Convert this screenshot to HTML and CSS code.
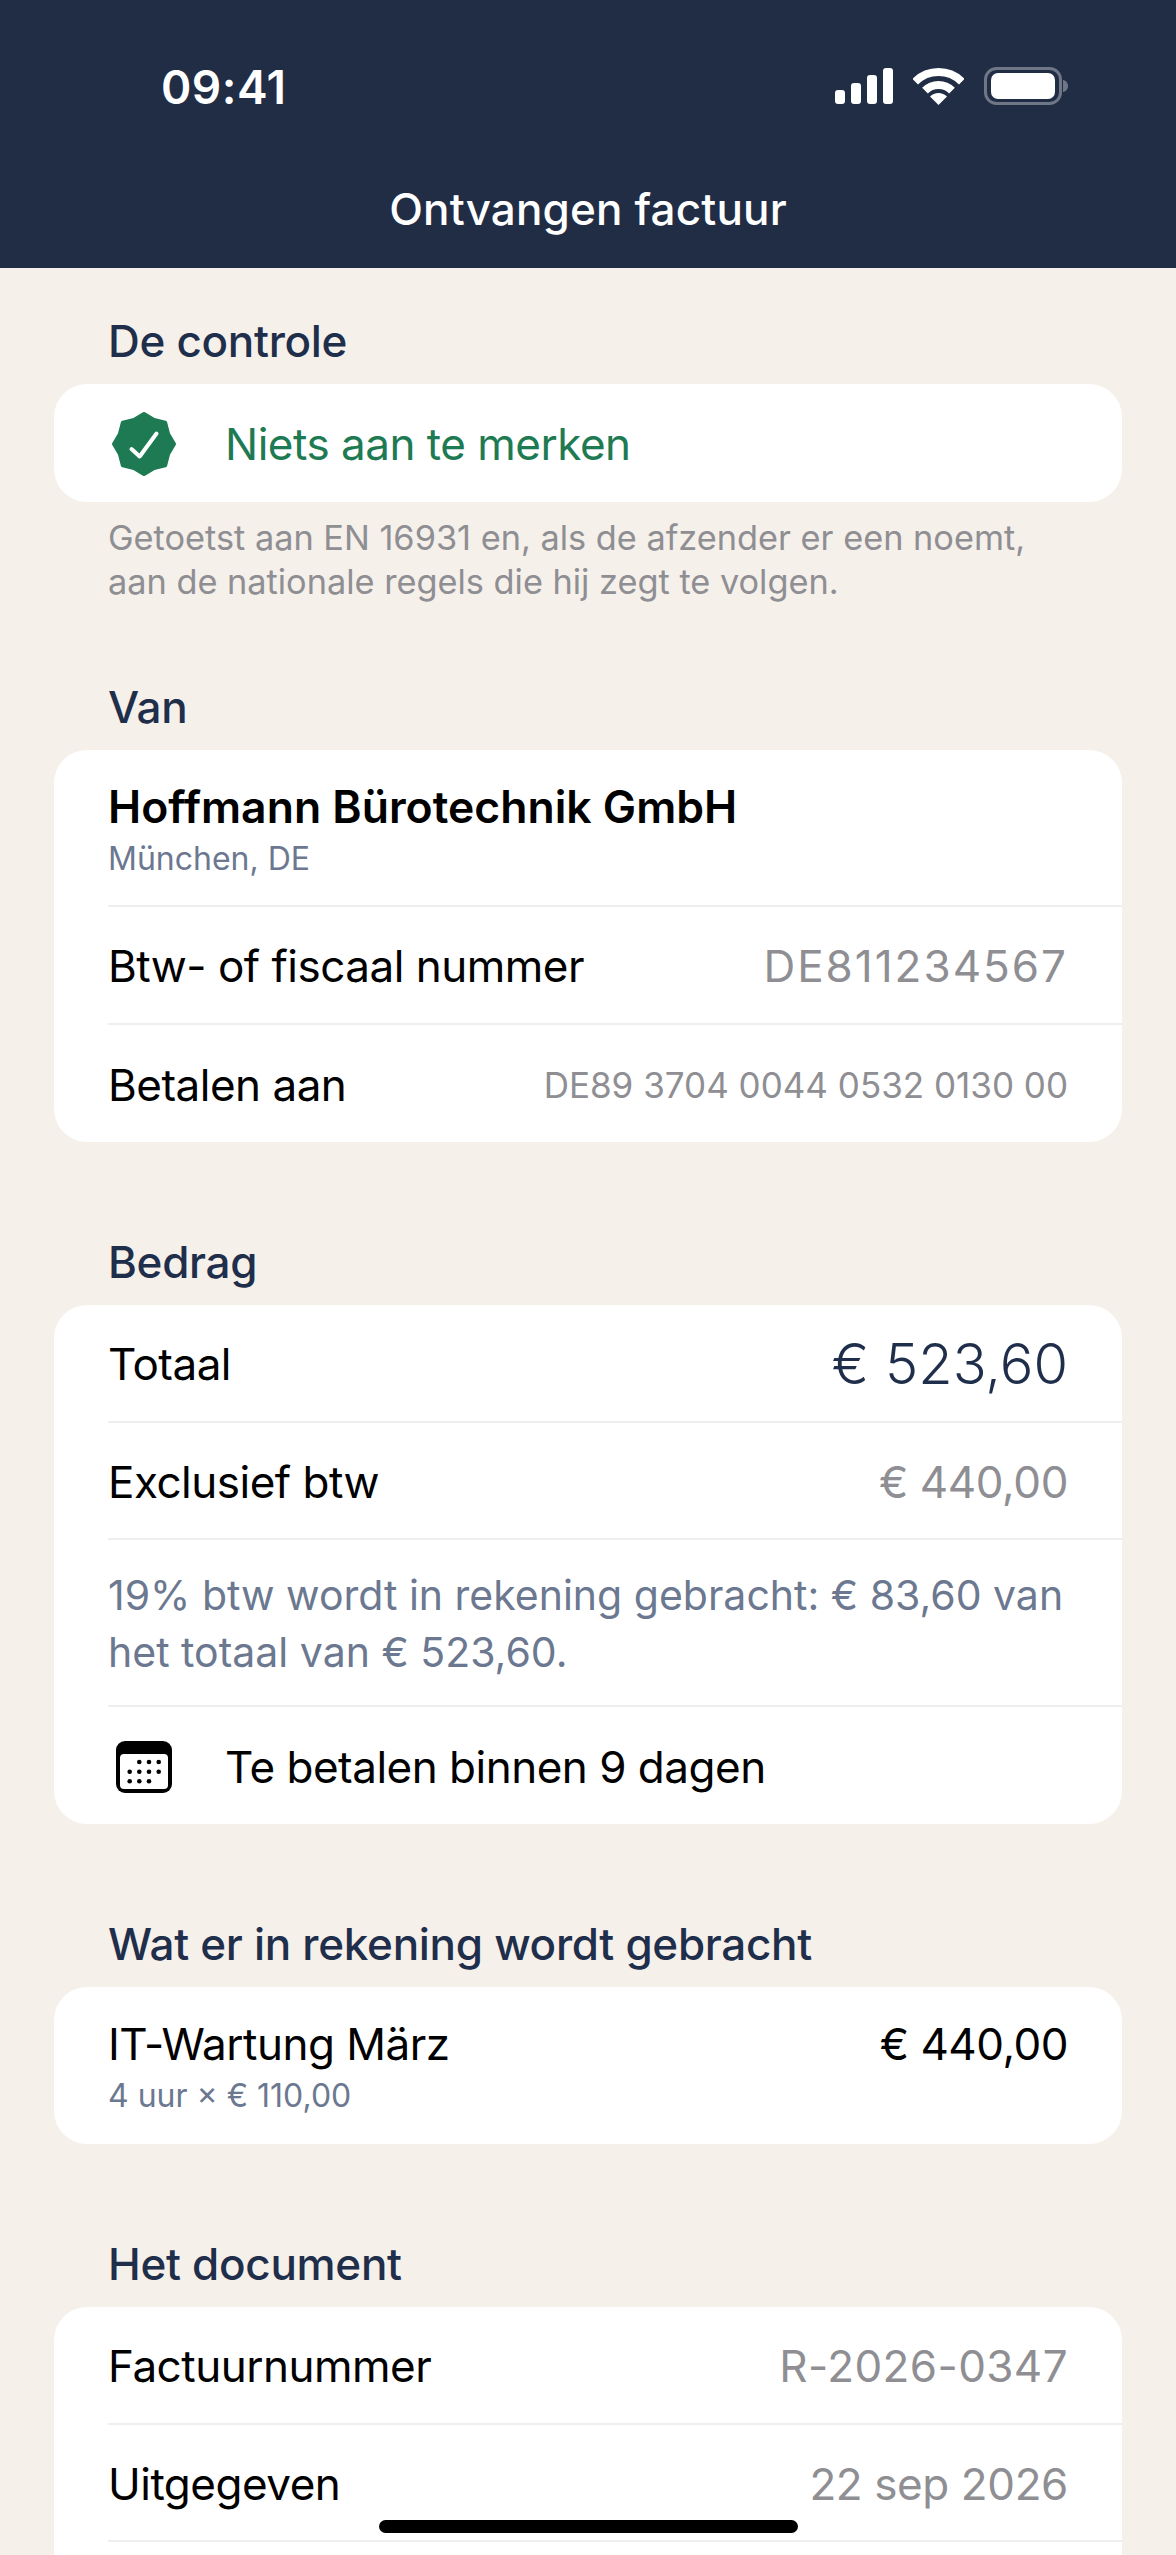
FILE: index.html
```html
<!DOCTYPE html>
<html lang="nl">
<head>
    <meta charset="UTF-8">
    <meta name="viewport" content="width=device-width, initial-scale=1.0">
    <title>Ontvangen factuur</title>
    <link rel="stylesheet" href="styles.css">
</head>
<body>

    <header class="topbar">
        <div class="status">
            <span class="time">09:41</span>
            <div class="status-icons">
                <svg width="58" height="36" viewBox="0 0 58 36" fill="#fff">
                    <rect x="0" y="22" width="10" height="14" rx="3"/>
                    <rect x="16" y="15" width="10" height="21" rx="3"/>
                    <rect x="32" y="7" width="10" height="29" rx="3"/>
                    <rect x="48" y="0" width="10" height="36" rx="3"/>
                </svg>
                <svg width="51" height="37" viewBox="0 0 51 37">
                    <path d="M2.2 13.7a33 33 0 0 1 46.6 0" fill="none" stroke="#fff" stroke-width="8"/>
                    <path d="M12 22.6a19 19 0 0 1 27 0" fill="none" stroke="#fff" stroke-width="8"/>
                    <path d="M25.5 37L17 28.5a12 12 0 0 1 17 0z" fill="#fff"/>
                </svg>
                <svg width="84" height="38" viewBox="0 0 84 38">
                    <rect x="1.5" y="1.5" width="75" height="35" rx="11" fill="none" stroke="#6f7787" stroke-width="3"/>
                    <rect x="7" y="6" width="64" height="26" rx="7" fill="#fff"/>
                    <path d="M79 13c3 .5 5 3 5 6s-2 5.500-5 6z" fill="#6f7787"/>
                </svg>
            </div>
        </div>
        <h1 class="page-title">Ontvangen factuur</h1>
    </header>

    <main class="content">
        <section class="section section-noted">
            <h2>De controle</h2>
            <div class="card">
                <div class="row row-icon">
                    <svg class="icon" width="68" height="68" viewBox="0 0 68 68">
                        <polygon points="34,4 44,9.900 55.200,12.800 58.100,24 64,34 58.100,44 55.200,55.200 44,58.100 34,64 24,58.100 12.800,55.200 9.900,44 4,34 9.900,24 12.800,12.800 24,9.900" fill="#1e7a52" stroke="#1e7a52" stroke-width="4" stroke-linejoin="round"/>
                        <path d="M21.500 39l8.200 7.500L46.500 23.500" fill="none" stroke="#fff" stroke-width="4" stroke-linecap="round" stroke-linejoin="round"/>
                    </svg>
                    <span class="ok">Niets aan te merken</span>
                </div>
            </div>
            <p class="note">Getoetst aan EN 16931 en, als de afzender er een noemt,<br>aan de nationale regels die hij zegt te volgen.</p>
        </section>

        <section class="section">
            <h2>Van</h2>
            <div class="card">
                <div class="row row-stacked">
                    <div class="party-name">Hoffmann Bürotechnik GmbH</div>
                    <div class="sub">München, DE</div>
                </div>
                <div class="row"><span>Btw- of fiscaal nummer</span><span class="val val-wide">DE811234567</span></div>
                <div class="row"><span>Betalen aan</span><span class="val val-small">DE89 3704 0044 0532 0130 00</span></div>
            </div>
        </section>

        <section class="section">
            <h2>Bedrag</h2>
            <div class="card">
                <div class="row"><span>Totaal</span><span class="total">€ 523,60</span></div>
                <div class="row"><span>Exclusief btw</span><span class="val">€ 440,00</span></div>
                <div class="row row-text">19% btw wordt in rekening gebracht: € 83,60 van het totaal van € 523,60.</div>
                <div class="row row-icon">
                    <svg class="icon" width="56" height="52" viewBox="0 0 56 52">
                        <rect width="56" height="52" rx="9" fill="#000"/>
                        <rect x="4" y="13" width="48" height="35" rx="4" fill="#fff"/>
                        <g fill="#000">
                            <circle cx="23.300" cy="21" r="2.300"/><circle cx="33" cy="21" r="2.300"/><circle cx="42.700" cy="21" r="2.300"/>
                            <circle cx="13.700" cy="30.700" r="2.300"/><circle cx="23.300" cy="30.700" r="2.300"/><circle cx="33" cy="30.700" r="2.300"/><circle cx="42.700" cy="30.700" r="2.300"/>
                            <circle cx="13.700" cy="40.300" r="2.300"/><circle cx="23.300" cy="40.300" r="2.300"/><circle cx="33" cy="40.300" r="2.300"/>
                        </g>
                    </svg>
                    <span>Te betalen binnen 9 dagen</span>
                </div>
            </div>
        </section>

        <section class="section">
            <h2>Wat er in rekening wordt gebracht</h2>
            <div class="card">
                <div class="row row-stacked row-item">
                    <div>
                        <div class="item-name">IT-Wartung März</div>
                        <div class="sub">4 uur × € 110,00</div>
                    </div>
                    <span class="item-name">€ 440,00</span>
                </div>
            </div>
        </section>

        <section class="section">
            <h2>Het document</h2>
            <div class="card">
                <div class="row"><span>Factuurnummer</span><span class="val val-code">R-2026-0347</span></div>
                <div class="row"><span>Uitgegeven</span><span class="val">22 sep 2026</span></div>
                <div class="row"></div>
            </div>
        </section>
    </main>

    <div class="home-bar"></div>

</body>
</html>
```

FILE: styles.css
```css
html, body { height: 2555px; overflow: hidden; }
body { margin: 0; background: #f5f0ea; font-family: Inter, "Liberation Sans", sans-serif; color: #000; font-size: 44px; letter-spacing: -0.5px; }

.topbar { background: #212d45; height: 268px; color: #fff; box-sizing: border-box; padding-top: 60px; }
.status { display: flex; justify-content: space-between; align-items: center; padding: 0 108px 0 161px; height: 52px; }
.time { font-size: 46px; font-weight: 600; letter-spacing: 0.5px; margin-top: 2px; }
.status-icons { display: flex; align-items: center; gap: 20px; }
.page-title { margin: 69px 0 0; text-align: center; font-size: 44px; font-weight: 500; line-height: 56px; letter-spacing: 0.15px; }

.content { padding: 45px 54px 0; }
.section { margin-bottom: 92px; }
.section-noted { margin-bottom: 75px; }
h2 { margin: 0 0 14px 54px; font-size: 44px; font-weight: 500; line-height: 57px; color: #1f2e4a; letter-spacing: -0.3px; }

.card { background: #fff; border-radius: 33px; overflow: hidden; }
.row { display: flex; justify-content: space-between; align-items: center; min-height: 117.5px; box-sizing: border-box; padding: 3px 54px 0 0; margin-left: 54px; border-bottom: 2px solid #eeeef0; }
.row:last-child { border-bottom: 0; }
.row-icon { justify-content: flex-start; }
.icon { flex: none; width: 68px; margin: 0 47px 0 2px; }
.row-stacked { display: block; height: 157px; padding-top: 29px; }
.row-item { display: flex; align-items: flex-start; }
.party-name { font-weight: 600; font-size: 44.500px; line-height: 56px; letter-spacing: 0; }
.item-name { line-height: 56px; }
.row-text { display: block; height: 166.700px; padding-top: 27px; color: #6b7890; line-height: 57px; font-size: 41px; letter-spacing: 0; }

.sub { font-size: 32px; line-height: 40px; margin-top: 4px; color: #6b7890; letter-spacing: 0; }
.val { color: #8e8e93; letter-spacing: -0.4px; }
.val-wide { letter-spacing: 2px; }
.val-code { letter-spacing: 0.4px; }
.val-small { font-size: 35px; letter-spacing: 0; }
.total { font-size: 56px; font-weight: 300; color: #1f2e4a; letter-spacing: 0; }
.ok { color: #1e7a52; }
.note { margin: 14.500px 54px 0; font-size: 34.300px; line-height: 44px; color: #8e8e93; letter-spacing: 0; }

.home-bar { position: fixed; left: 379px; top: 2520px; width: 419px; height: 13px; border-radius: 7px; background: #000; }
```
